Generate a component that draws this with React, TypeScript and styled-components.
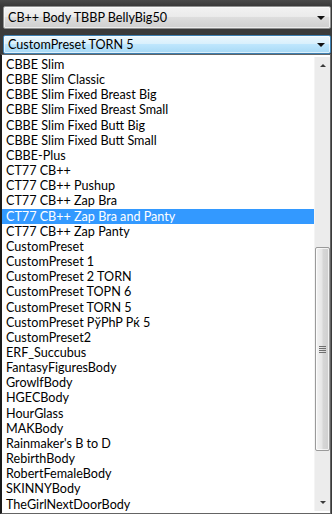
import React from 'react';
import styled, { createGlobalStyle } from 'styled-components';

const presets = [
  'CBBE Slim',
  'CBBE Slim Classic',
  'CBBE Slim Fixed Breast Big',
  'CBBE Slim Fixed Breast Small',
  'CBBE Slim Fixed Butt Big',
  'CBBE Slim Fixed Butt Small',
  'CBBE-Plus',
  'CT77 CB++',
  'CT77 CB++ Pushup',
  'CT77 CB++ Zap Bra',
  'CT77 CB++ Zap Bra and Panty',
  'CT77 CB++ Zap Panty',
  'CustomPreset',
  'CustomPreset 1',
  'CustomPreset 2 TORN',
  'CustomPreset TOPN 6',
  'CustomPreset TORN 5',
  'CustomPreset PўPhP Pќ 5',
  'CustomPreset2',
  'ERF_Succubus',
  'FantasyFiguresBody',
  'GrowlfBody',
  'HGECBody',
  'HourGlass',
  'MAKBody',
  "Rainmaker's B to D",
  'RebirthBody',
  'RobertFemaleBody',
  'SKINNYBody',
  'TheGirlNextDoorBody'
];

const GlobalStyle = createGlobalStyle`
  html, body {
    margin: 0;
    padding: 0;
    background: #3b3b3b;
  }
  body {
    font-family: Lato, 'Noto Sans', sans-serif;
    font-size: 12.6px;
    color: #000;
  }
`;

const StyledPage = styled.div`
  display: flex;
  flex-direction: column;
  width: 332px;
  height: 514px;
  padding-top: 6px;
  box-sizing: border-box;
  background: linear-gradient(#4a4a4a, #3a3a3a 6px, #3a3a3a);
  overflow: hidden;
`;

const StyledCombo = styled.div<{ $open?: boolean }>`
  display: flex;
  align-items: center;
  justify-content: space-between;
  box-sizing: border-box;
  height: ${({ $open }) => ($open ? '19px' : '23px')};
  margin: ${({ $open }) => ($open ? '6px 1px 0 3px' : '0 1px 0 3px')};
  padding: 0 5px 0 4px;
  border: 1px solid ${({ $open }) => ($open ? '#3c7fb1' : '#8e8f8f')};
  border-radius: 2px;
  background: ${({ $open }) =>
    $open
      ? 'linear-gradient(#eaf6fd 0%, #d9f0fc 45%, #bee6fd 50%, #a7d9f5 100%)'
      : 'linear-gradient(#f2f2f2 0%, #ebebeb 45%, #dddddd 50%, #cfcfcf 100%)'};
  box-shadow: inset 0 0 0 1px rgba(255, 255, 255, 0.6);
  line-height: 1.2;

  .value {
    white-space: nowrap;
  }
`;

const Arrow = styled.span`
  display: block;
  width: 0;
  height: 0;
  border-left: 4px solid transparent;
  border-right: 4px solid transparent;
  border-top: 4px solid #111;
`;

const StyledDropList = styled.div`
  display: flex;
  flex: 1;
  margin-right: 1px;
  box-sizing: border-box;
  border: 1px solid #646464;
  border-left-width: 2px;
  border-left-color: #1a1a1a;
  background: #fff;
  padding: 2px 0 2px 0;
  min-height: 0;
`;

const StyledItems = styled.ul`
  list-style: none;
  margin: 0;
  padding: 0;
  flex: 1;
  min-width: 0;
`;

const StyledItem = styled.li<{ $selected?: boolean }>`
  display: flex;
  align-items: center;
  height: 15.17px;
  line-height: 1.2;
  padding-left: 4px;
  white-space: nowrap;
  background: ${({ $selected }) => ($selected ? '#3399ff' : 'transparent')};
  color: ${({ $selected }) => ($selected ? '#fff' : '#000')};
`;

const StyledScrollBar = styled.div`
  display: flex;
  flex-direction: column;
  width: 16px;
  background: #ececec;
  border-left: 1px solid #f4f4f4;
  box-sizing: border-box;

  .thumb-space {
    flex: 1;
    display: flex;
    flex-direction: column;
    padding-top: 173px;
    padding-bottom: 43px;
  }
`;

const ScrollButton = styled.div<{ $up?: boolean }>`
  display: flex;
  align-items: center;
  justify-content: center;
  height: 17px;

  span {
    width: 0;
    height: 0;
    border-left: 3px solid transparent;
    border-right: 3px solid transparent;
    ${({ $up }) => ($up ? 'border-bottom: 3px solid #3a3a3a;' : 'border-top: 3px solid #3a3a3a;')}
  }
`;

const Thumb = styled.div`
  flex: 1;
  display: flex;
  align-items: center;
  justify-content: center;
  border: 1px solid #9a9a9a;
  border-radius: 2px;
  background: linear-gradient(90deg, #f3f3f3 0%, #e6e6e6 45%, #d6d6d6 55%, #cfcfcf 100%);
  box-shadow: inset 0 0 0 1px rgba(255, 255, 255, 0.7);

  .grip {
    display: flex;
    flex-direction: column;
    gap: 1px;
    span {
      display: block;
      width: 7px;
      height: 1px;
      background: #6e6e6e;
    }
  }
`;

const App: React.FC = () => {
  const selected = 'CT77 CB++ Zap Bra and Panty';

  return (
    <>
      <GlobalStyle />
      <StyledPage>
        <StyledCombo>
          <span className="value">CB++ Body TBBP BellyBig50</span>
          <Arrow />
        </StyledCombo>

        <StyledCombo $open>
          <span className="value">CustomPreset TORN 5</span>
          <Arrow />
        </StyledCombo>

        <StyledDropList>
          <StyledItems>
            {presets.map((name, i) => (
              <StyledItem key={i} $selected={name === selected}>
                {name}
              </StyledItem>
            ))}
          </StyledItems>

          <StyledScrollBar>
            <ScrollButton $up>
              <span />
            </ScrollButton>
            <div className="thumb-space">
              <Thumb>
                <div className="grip">
                  <span />
                  <span />
                  <span />
                  <span />
                </div>
              </Thumb>
            </div>
            <ScrollButton>
              <span />
            </ScrollButton>
          </StyledScrollBar>
        </StyledDropList>
      </StyledPage>
    </>
  );
};

export default App;
